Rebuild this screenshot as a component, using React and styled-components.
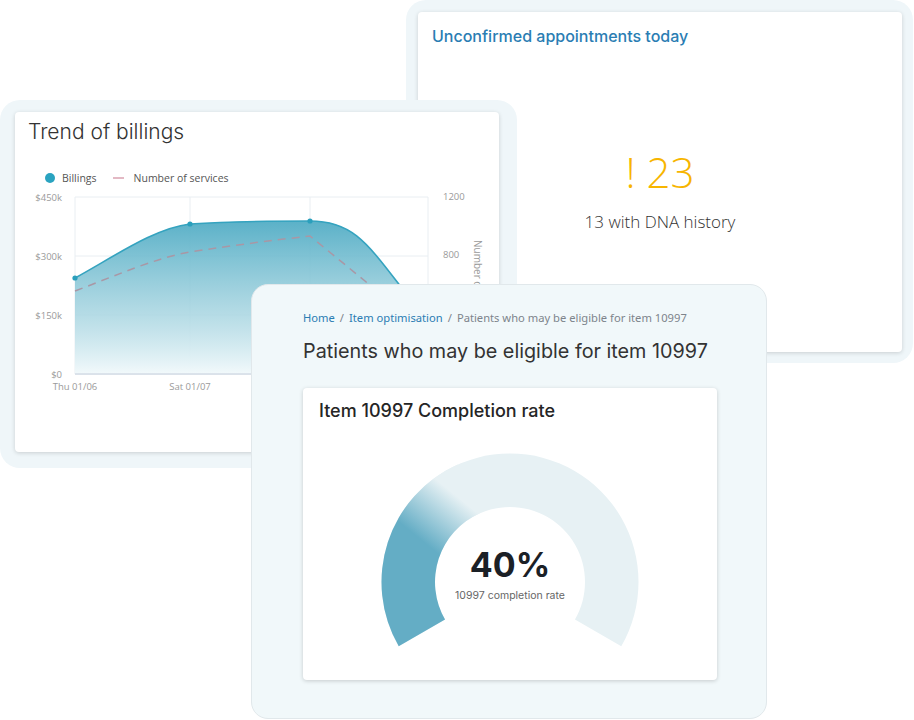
import React from "react";
import styled, { createGlobalStyle } from "styled-components";

const GlobalStyle = createGlobalStyle`
  html, body {
    margin: 0;
    padding: 0;
    background: #ffffff;
    overflow: hidden;
  }
  * { box-sizing: border-box; }
`;

const HEAD_FONT = `"Inter", "Open Sans", sans-serif`;
const BODY_FONT = `"Open Sans", "Noto Sans", sans-serif`;

export default function App() {
  return (
    <>
      <GlobalStyle />
      <Canvas>
        <AppointmentsFrame>
          <WhiteCard>
            <AppointmentsTitle>Unconfirmed appointments today</AppointmentsTitle>
            <BigCount>! 23</BigCount>
            <CountNote>13 with DNA history</CountNote>
          </WhiteCard>
        </AppointmentsFrame>

        <BillingFrame>
          <WhiteCard>
            <BillingTitle>Trend of billings</BillingTitle>
            <Legend>
              <LegendItem>
                <LegendDot />
                Billings
              </LegendItem>
              <LegendItem>
                <LegendDash />
                Number of services
              </LegendItem>
            </Legend>
            <BillingChart />
          </WhiteCard>
        </BillingFrame>

        <EligibilityPanel>
          <Breadcrumb>
            <Crumb $link>Home</Crumb>
            <Slash>/</Slash>
            <Crumb $link>Item optimisation</Crumb>
            <Slash>/</Slash>
            <Crumb>Patients who may be eligible for item 10997</Crumb>
          </Breadcrumb>
          <PageHeading>Patients who may be eligible for item 10997</PageHeading>
          <RateCard>
            <RateTitle>Item 10997 Completion rate</RateTitle>
            <Gauge percent={40} />
          </RateCard>
        </EligibilityPanel>
      </Canvas>
    </>
  );
}

function BillingChart() {
  const grid = [9, 68, 127, 186];
  const cols = [60, 175, 295, 413];
  const billings =
    "M60,90 C100,68 140,40 175,36 C220,33 260,33 295,33 C335,33 350,52 383,95 S405,125 413,140";
  return (
    <ChartSvg width="483" height="210" viewBox="0 0 483 210">
      <defs>
        <linearGradient id="billFill" x1="0" y1="33" x2="0" y2="186" gradientUnits="userSpaceOnUse">
          <stop offset="0" stopColor="#52adc5" stopOpacity="0.95" />
          <stop offset="0.55" stopColor="#9fd1de" stopOpacity="0.85" />
          <stop offset="1" stopColor="#f2f9fb" stopOpacity="1" />
        </linearGradient>
      </defs>
      {grid.map((y) => (
        <line key={y} x1="60" x2="413" y1={y} y2={y} stroke="#e9eef2" strokeWidth="1" />
      ))}
      {cols.map((x) => (
        <line key={x} x1={x} x2={x} y1="9" y2="186" stroke="#e9eef2" strokeWidth="1" />
      ))}
      <path d={`${billings} L413,186 L60,186 Z`} fill="url(#billFill)" />
      <path d={billings} fill="none" stroke="#35a3bf" strokeWidth="1.6" />
      <path
        d="M60,103 C100,88 140,70 175,64 C220,57 260,52 295,48 L350,93 L413,150"
        fill="none"
        stroke="#a997a5"
        strokeWidth="1.5"
        strokeDasharray="8 6"
      />
      <line x1="60" x2="413" y1="186" y2="186" stroke="#d3dbe6" strokeWidth="1.5" />
      {[
        [60, 90],
        [175, 36],
        [295, 33],
      ].map(([x, y]) => (
        <circle key={x} cx={x} cy={y} r="2.6" fill="#2a9fbc" />
      ))}
      <g fontFamily={BODY_FONT} fontSize="9.5" fill="#9a9a9a">
        <text x="47" y="12.5" textAnchor="end">$450k</text>
        <text x="47" y="71.5" textAnchor="end">$300k</text>
        <text x="47" y="130.5" textAnchor="end">$150k</text>
        <text x="47" y="189.5" textAnchor="end">$0</text>
        <text x="428" y="11.5">1200</text>
        <text x="428" y="69.5">800</text>
        <text x="60" y="201.5" textAnchor="middle">Thu 01/06</text>
        <text x="175" y="201.5" textAnchor="middle">Sat 01/07</text>
        <text transform="translate(459 52) rotate(90)" fontSize="10">Number of services</text>
      </g>
    </ChartSvg>
  );
}

function polar(cx, cy, r, deg) {
  const a = (deg * Math.PI) / 180;
  return [cx + r * Math.cos(a), cy - r * Math.sin(a)];
}

function ringArc(cx, cy, R, r, from, to) {
  const [x1, y1] = polar(cx, cy, R, from);
  const [x2, y2] = polar(cx, cy, R, to);
  const [x3, y3] = polar(cx, cy, r, to);
  const [x4, y4] = polar(cx, cy, r, from);
  const large = from - to > 180 ? 1 : 0;
  return `M${x1},${y1} A${R},${R} 0 ${large} 1 ${x2},${y2} L${x3},${y3} A${r},${r} 0 ${large} 0 ${x4},${y4} Z`;
}

function Gauge({ percent }) {
  const cx = 130;
  const cy = 130;
  const R = 128.5;
  const r = 75;
  const start = 210;
  const end = start - (240 * percent) / 100;
  const [gx1, gy1] = polar(cx, cy, 102, 160);
  const [gx2, gy2] = polar(cx, cy, 102, 122);
  return (
    <GaugeWrap>
      <svg width="260" height="200" viewBox="0 0 260 200">
        <defs>
          <linearGradient id="gaugeFill" x1={gx1} y1={gy1} x2={gx2} y2={gy2} gradientUnits="userSpaceOnUse">
            <stop offset="0" stopColor="#64adc5" />
            <stop offset="0.15" stopColor="#64adc5" />
            <stop offset="1" stopColor="#e7f1f4" />
          </linearGradient>
        </defs>
        <path d={ringArc(cx, cy, R, r, 210, -30)} fill="#e7f1f4" />
        <path d={ringArc(cx, cy, R, r, start, end)} fill="url(#gaugeFill)" />
      </svg>
      <GaugeLabel>
        <GaugeValue>{percent}%</GaugeValue>
        <GaugeCaption>10997 completion rate</GaugeCaption>
      </GaugeLabel>
    </GaugeWrap>
  );
}

const Canvas = styled.div`
  position: relative;
  width: 914px;
  height: 720px;
  overflow: hidden;
  background: #ffffff;
`;

const Frame = styled.div`
  position: absolute;
  display: flex;
  background: #eff6f9;
  border-radius: 20px;
`;

const AppointmentsFrame = styled(Frame)`
  left: 406px;
  top: 0;
  width: 507px;
  height: 363px;
  padding: 12px 11px 11px 12px;
`;

const BillingFrame = styled(Frame)`
  left: 0;
  top: 100px;
  width: 517px;
  height: 368px;
  padding: 12px 18px 16px 15px;
`;

const WhiteCard = styled.div`
  flex: 1;
  display: flex;
  flex-direction: column;
  background: #ffffff;
  border-radius: 4px;
  box-shadow: 0 1px 4px rgba(0, 0, 0, 0.16);
  overflow: hidden;
`;

const AppointmentsTitle = styled.div`
  font-family: ${HEAD_FONT};
  font-weight: 500;
  font-size: 16px;
  line-height: 20px;
  color: #2a7db3;
  padding: 14px 14px 0;
`;

const BigCount = styled.div`
  margin-top: 101px;
  text-align: center;
  font-family: ${BODY_FONT};
  font-weight: 300;
  font-size: 42px;
  line-height: 50px;
  color: #f7b500;
`;

const CountNote = styled.div`
  margin-top: 14px;
  text-align: center;
  font-family: ${BODY_FONT};
  font-weight: 300;
  font-size: 17px;
  line-height: 22px;
  color: #333333;
`;

const BillingTitle = styled.div`
  font-family: ${HEAD_FONT};
  font-weight: 300;
  font-size: 21px;
  line-height: 24px;
  color: #333333;
  padding: 8px 13px 0;
`;

const Legend = styled.div`
  display: flex;
  align-items: center;
  gap: 16px;
  padding: 27px 0 0 30px;
  font-family: ${BODY_FONT};
  font-size: 10.5px;
  line-height: 14px;
  color: #555555;
`;

const LegendItem = styled.div`
  display: flex;
  align-items: center;
  gap: 7px;
`;

const LegendDot = styled.span`
  width: 10px;
  height: 10px;
  border-radius: 50%;
  background: #2aa3c0;
`;

const LegendDash = styled.span`
  width: 11px;
  height: 1.5px;
  background: #e3b9c4;
  margin-right: 3px;
`;

const ChartSvg = styled.svg`
  display: block;
  margin-top: 3px;
`;

const EligibilityPanel = styled.div`
  position: absolute;
  left: 251px;
  top: 284px;
  width: 516px;
  height: 435px;
  padding: 26px 0 0 51px;
  background: #f1f8fa;
  border: 1px solid #e1e8eb;
  border-radius: 17px;
  display: flex;
  flex-direction: column;
`;

const Breadcrumb = styled.div`
  display: flex;
  align-items: center;
  gap: 5px;
  font-family: "Noto Sans", "Open Sans", sans-serif;
  font-size: 11.2px;
  line-height: 16px;
  margin-top: -1px;
`;

const Crumb = styled.span`
  color: ${(p) => (p.$link ? "#2b7db3" : "#7d848b")};
`;

const Slash = styled.span`
  color: #7d848b;
`;

const PageHeading = styled.div`
  margin-top: 12px;
  font-family: ${HEAD_FONT};
  font-weight: 400;
  font-size: 19.8px;
  line-height: 26px;
  color: #333333;
`;

const RateCard = styled.div`
  margin-top: 24px;
  width: 414px;
  height: 292px;
  background: #ffffff;
  border-radius: 4px;
  box-shadow: 0 1px 4px rgba(0, 0, 0, 0.18);
  padding: 12px 16px 0;
  display: flex;
  flex-direction: column;
`;

const RateTitle = styled.div`
  font-family: ${HEAD_FONT};
  font-weight: 500;
  font-size: 18px;
  line-height: 22px;
  color: #252525;
`;

const GaugeWrap = styled.div`
  position: relative;
  align-self: center;
  width: 260px;
  height: 200px;
  margin-top: 30px;

  svg {
    display: block;
  }
`;

const GaugeLabel = styled.div`
  position: absolute;
  left: 0;
  right: 0;
  top: 92px;
  display: flex;
  flex-direction: column;
  align-items: center;
`;

const GaugeValue = styled.div`
  font-family: ${HEAD_FONT};
  font-weight: 700;
  font-size: 34px;
  line-height: 42px;
  color: #1b2026;
`;

const GaugeCaption = styled.div`
  margin-top: 3px;
  font-family: ${HEAD_FONT};
  font-size: 10.5px;
  line-height: 14px;
  color: #666666;
`;
